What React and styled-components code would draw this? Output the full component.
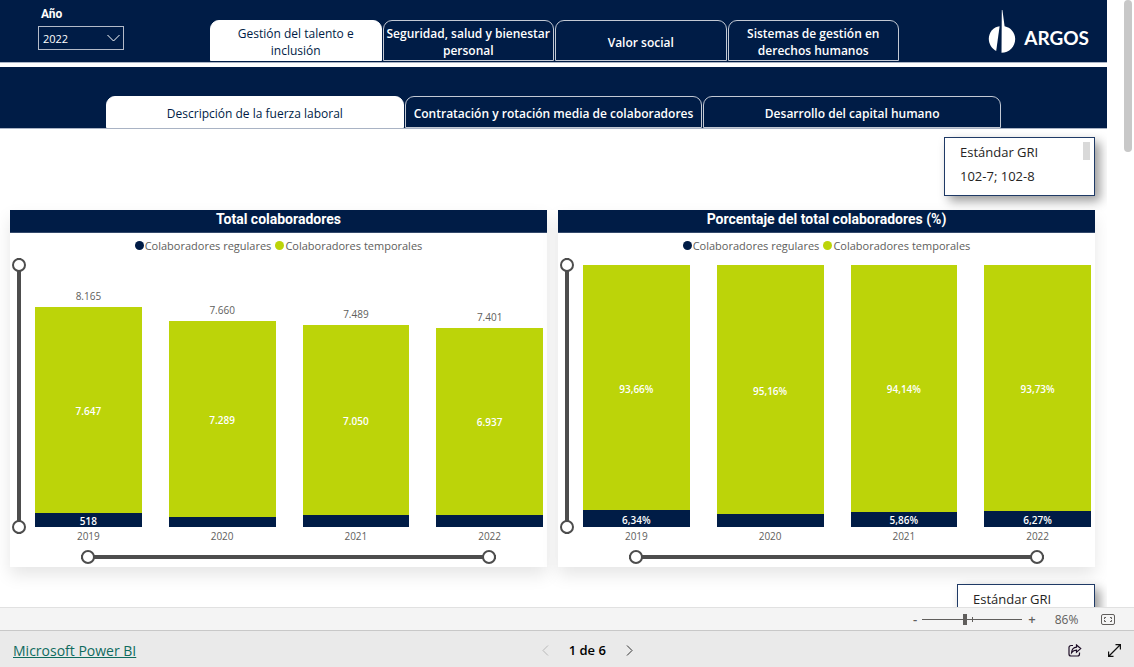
import React, { useState } from 'react';
import styled, { createGlobalStyle } from 'styled-components';

const navy = '#001c46';
const lime = '#bcd409';

const GlobalStyle = createGlobalStyle`
    * {
        box-sizing: border-box;
    }
    body {
        margin: 0;
        background: #fff;
        color: #252423;
        font-family: "Open Sans", "Noto Sans", sans-serif;
        font-size: 12px;
    }
    button, select, input {
        font: inherit;
        color: inherit;
    }
    button {
        padding: 0;
        border: none;
        background: none;
        cursor: pointer;
    }
`;

const Page = styled.div`
    display: flex;
    flex-direction: column;
    height: 100vh;
`;
const Viewport = styled.div`
    display: flex;
    flex: 1;
    min-height: 0;
    overflow: hidden;
`;
const Report = styled.main`
    flex: 1;
    min-width: 0;
    overflow: hidden;
`;
const Rail = styled.div`
    display: flex;
    justify-content: flex-end;
    width: 27px;
    padding-right: 2px;
`;
const Thumb = styled.div`
    width: 8px;
    height: 25%;
    border-radius: 4px;
    background: #c8c8c8;
`;

const Header = styled.header`
    display: grid;
    grid-template-columns: 210px minmax(0, 689px) 1fr;
    height: 63px;
    margin-bottom: 4px;
    background: ${navy};
    border-bottom: 1px solid #a9b3c4;
`;
const YearField = styled.label`
    display: flex;
    flex-direction: column;
    width: 124px;
    padding: 6px 0 0 38px;
    color: #fff;
`;
const YearName = styled.span`
    padding-left: 3px;
    font-family: Roboto, sans-serif;
    font-weight: 700;
    line-height: 16px;
`;
const YearBox = styled.span`
    display: grid;
    align-items: center;
    height: 24px;
    margin-top: 4px;
    border: 1px solid #b3bac8;
    > * {
        grid-area: 1 / 1;
    }
    svg {
        justify-self: end;
        margin-right: 3px;
        pointer-events: none;
    }
`;
const YearSelect = styled.select`
    width: 100%;
    height: 100%;
    padding: 1px 4px 0;
    appearance: none;
    border: none;
    background: transparent;
    color: #fff;
    font-size: 11px;
    option {
        color: #252423;
    }
`;
const MainTabs = styled.nav`
    display: flex;
    gap: 1px;
    padding: 20px 0 1px;
`;
const SubTabs = styled.nav`
    display: flex;
    gap: 1px;
    height: 62px;
    padding: 29px 106px 0;
    background: ${navy};
    border-bottom: 1px solid #a9b3c4;
`;
const Tab = styled.button`
    flex: 1 1 0;
    min-width: 0;
    padding: 3px 2px 0;
    line-height: 17px;
    border: 1px solid ${({active}) => active ? '#fff' : '#c3c9d4'};
    border-radius: 9px 9px 0 0;
    background: ${({active}) => active ? '#fff' : navy};
    color: ${({active}) => active ? navy : '#fff'};
    font-weight: ${({active}) => active ? 400 : 600};
`;
const Brand = styled.div`
    display: flex;
    justify-content: flex-end;
    align-items: flex-start;
    gap: 8px;
    padding: 9px 18px 0 0;
    color: #fff;
`;
const BrandName = styled.span`
    padding-top: 17px;
    font-family: Lato, sans-serif;
    font-size: 19px;
    font-weight: 700;
    line-height: 24px;
`;

const Standards = styled.div`
    display: flex;
    justify-content: flex-end;
    padding: ${({top}) => top}px 12px 0 0;
`;
const StandardBox = styled.section`
    display: flex;
    justify-content: space-between;
    width: ${({width}) => width}px;
    height: 59px;
    padding: 2px 4px 0 15px;
    border: 1px solid #1f3a66;
    background: #fff;
    box-shadow: 5px 5px 10px rgba(0, 0, 0, 0.4);
    font-size: 13px;
    line-height: 24px;
    p {
        margin: 0;
    }
`;
const BoxThumb = styled.div`
    width: 7px;
    height: 18px;
    margin-top: 2px;
    background: #d9d9d9;
`;

const Cards = styled.div`
    display: grid;
    grid-template-columns: 1fr 1fr;
    gap: 11px;
    padding: 14px 12px 0 10px;
`;
const Card = styled.section`
    height: 357px;
    background: #fff;
    box-shadow: 0 8px 16px rgba(0, 0, 0, 0.1);
`;
const CardTitle = styled.h2`
    height: 23px;
    margin: 0;
    background: ${navy};
    border-bottom: 1px solid #33496b;
    color: #fff;
    font-family: Roboto, sans-serif;
    font-size: 14px;
    font-weight: 700;
    line-height: 19px;
    text-align: center;
`;
const Legend = styled.div`
    display: flex;
    justify-content: center;
    gap: 4px;
    height: 25px;
    font-size: 11px;
    line-height: 25px;
    color: #605e5c;
`;
const LegendItem = styled.span`
    display: flex;
    align-items: center;
    gap: 1px;
    &::before {
        content: '';
        width: 9px;
        height: 9px;
        border-radius: 50%;
        background: ${({color}) => color};
    }
`;
const ChartBody = styled.div`
    display: grid;
    grid-template-columns: 14px 1fr;
    column-gap: 9px;
    padding: 0 4px 0 2px;
`;
const Plot = styled.div`
    display: flex;
    gap: 27px;
    padding-top: 7px;
`;
const Column = styled.div`
    flex: 1 1 0;
    text-align: center;
    font-size: 10px;
    color: #605e5c;
`;
const Stack = styled.div`
    display: flex;
    flex-direction: column;
    justify-content: flex-end;
    height: 262px;
`;
const Total = styled.div`
    line-height: 22px;
`;
const Segment = styled.div`
    display: flex;
    align-items: center;
    justify-content: center;
    flex-shrink: 0;
    padding-top: 2px;
    background: ${({color}) => color};
    color: #fff;
    font-weight: 600;
    line-height: 12px;
`;
const Year = styled.div`
    padding-bottom: 2px;
    line-height: 18px;
`;

const RangeBox = styled.div`
    display: grid;
    ${({vertical}) => vertical ? 'height: 276px;' : 'height: 14px; margin: 3px 51px 0 71px;'}
`;
const RangeInput = styled.input`
    grid-area: 1 / 1;
    margin: 0;
    appearance: none;
    background: transparent;
    pointer-events: none;
    ${({vertical}) => vertical ?
        'width: 14px; height: 100%; writing-mode: vertical-lr; direction: rtl;'
        : 'width: 100%; height: 14px;'}
    &::-webkit-slider-runnable-track {
        ${({vertical}) => vertical ? 'width: 4px; height: 100%;' : 'width: 100%; height: 4px;'}
        background: #4d4d4d;
    }
    &::-webkit-slider-thumb {
        appearance: none;
        width: 14px;
        height: 14px;
        ${({vertical}) => vertical ? 'margin-left: -5px;' : 'margin-top: -5px;'}
        border: 2px solid #4d4d4d;
        border-radius: 50%;
        background: #fff;
        pointer-events: auto;
    }
    & + &::-webkit-slider-runnable-track {
        background: transparent;
    }
`;

const ZoomBar = styled.div`
    display: flex;
    align-items: center;
    justify-content: flex-end;
    height: 23px;
    padding-right: 19px;
    border-top: 1px solid #e1e1e1;
    background: #f4f4f4;
    color: #605e5c;
`;
const ZoomStep = styled.button`
    width: 14px;
    font-size: 13px;
    font-weight: 600;
    line-height: 20px;
`;
const ZoomTrack = styled.div`
    display: grid;
    align-items: center;
    width: 100px;
    margin-right: 3px;
    > * {
        grid-area: 1 / 1;
    }
`;
const ZoomTick = styled.span`
    justify-self: center;
    width: 1px;
    height: 5px;
    background: #605e5c;
`;
const ZoomInput = styled.input`
    width: 100%;
    height: 11px;
    margin: 0;
    appearance: none;
    background: transparent;
    &::-webkit-slider-runnable-track {
        height: 1px;
        background: #605e5c;
    }
    &::-webkit-slider-thumb {
        appearance: none;
        width: 4px;
        height: 11px;
        margin-top: -5px;
        background: #605e5c;
    }
`;
const ZoomValue = styled.span`
    width: 62px;
    padding-right: 7px;
    text-align: center;
`;
const IconButton = styled.button`
    display: flex;
    align-items: center;
`;
const Footer = styled.footer`
    display: grid;
    grid-template-columns: 13fr auto 12fr;
    align-items: center;
    height: 37px;
    padding: 2px 13px 0;
    border-top: 1px solid #c8c8c8;
    background: #eaeaea;
`;
const PowerLink = styled.a`
    color: #0f6b5e;
    font-size: 14px;
    text-decoration: underline;
`;
const Pager = styled.div`
    display: flex;
    align-items: center;
    gap: 20px;
    color: #000;
    font-size: 13px;
    font-weight: 600;
`;
const FooterTools = styled.div`
    display: flex;
    justify-content: flex-end;
    gap: 26px;
`;

const mainTabs = [
    'Gestión del talento e inclusión',
    'Seguridad, salud y bienestar personal',
    'Valor social',
    'Sistemas de gestión en derechos humanos',
];
const subTabs = [
    'Descripción de la fuerza laboral',
    'Contratación y rotación media de colaboradores',
    'Desarrollo del capital humano',
];

const totals = [
    { year: 2019, total: '8.165', top: 7647, topText: '7.647', base: 518, baseText: '518' },
    { year: 2020, total: '7.660', top: 7289, topText: '7.289', base: 371 },
    { year: 2021, total: '7.489', top: 7050, topText: '7.050', base: 439 },
    { year: 2022, total: '7.401', top: 6937, topText: '6.937', base: 464 },
];
const shares = [
    { year: 2019, top: 93.66, topText: '93,66%', base: 6.34, baseText: '6,34%' },
    { year: 2020, top: 95.16, topText: '95,16%', base: 4.84 },
    { year: 2021, top: 94.14, topText: '94,14%', base: 5.86, baseText: '5,86%' },
    { year: 2022, top: 93.73, topText: '93,73%', base: 6.27, baseText: '6,27%' },
];

const ArgosMark = () => (
    <svg width="28" height="45" viewBox="0 0 28 45" fill="#fff" aria-hidden="true">
        <path d="M11.6 17.2C5.5 17.8 .8 23.2 .8 29.8c0 5.4 2.9 9.9 7.4 12.1z" />
        <path d="M13.8 1h.6l2.2 16.3c6 1.2 10.6 6.3 10.6 12.6 0 7.6-5.9 13.8-13.7 13.8z" />
    </svg>
);

const Chevron = ({ points, width, height, color }) => (
    <svg width={width} height={height} fill="none" stroke={color} aria-hidden="true">
        <polyline points={points} />
    </svg>
);

//dos controles superpuestos, uno por cada extremo del rango
const RangeSlider = ({ vertical, label }) => {
    const [low, setLow] = useState(0);
    const [high, setHigh] = useState(100);

    return (
        <RangeBox vertical={vertical}>
            <RangeInput
                type="range"
                aria-label={`${label}: mínimo`}
                vertical={vertical}
                value={low}
                onChange={(e) => setLow(Math.min(Number(e.target.value), high))}
            />
            <RangeInput
                type="range"
                aria-label={`${label}: máximo`}
                vertical={vertical}
                value={high}
                onChange={(e) => setHigh(Math.max(Number(e.target.value), low))}
            />
        </RangeBox>
    );
};

const ChartCard = ({ title, data, max }) => (
    <Card>
        <CardTitle>{title}</CardTitle>
        <Legend>
            <LegendItem color={navy}>Colaboradores regulares</LegendItem>
            <LegendItem color={lime}>Colaboradores temporales</LegendItem>
        </Legend>
        <ChartBody>
            <RangeSlider vertical label="Eje de valores" />
            <Plot>
                {data.map((item) => (
                    <Column key={item.year}>
                        <Stack>
                            {item.total && <Total>{item.total}</Total>}
                            <Segment color={lime} style={{ height: `${item.top / max * 100}%` }}>
                                {item.topText}
                            </Segment>
                            <Segment color={navy} style={{ height: `${item.base / max * 100}%` }}>
                                {item.baseText}
                            </Segment>
                        </Stack>
                        <Year>{item.year}</Year>
                    </Column>
                ))}
            </Plot>
        </ChartBody>
        <RangeSlider label="Años" />
    </Card>
);

const App = () => {
    const [year, setYear] = useState('2022');
    const [mainTab, setMainTab] = useState(0);
    const [subTab, setSubTab] = useState(0);
    const [zoom, setZoom] = useState(86);

    return (
        <Page>
            <GlobalStyle />
            <Viewport>
                <Report>
                    <Header>
                        <YearField>
                            <YearName>Año</YearName>
                            <YearBox>
                                <YearSelect value={year} onChange={(e) => setYear(e.target.value)}>
                                    <option>2019</option>
                                    <option>2020</option>
                                    <option>2021</option>
                                    <option>2022</option>
                                </YearSelect>
                                <Chevron points="0.5,1 6.5,7 12.5,1" width={13} height={8} color="#fff" />
                            </YearBox>
                        </YearField>
                        <MainTabs>
                            {mainTabs.map((text, i) => (
                                <Tab key={text} type="button" active={i === mainTab} onClick={() => setMainTab(i)}>
                                    {text}
                                </Tab>
                            ))}
                        </MainTabs>
                        <Brand>
                            <ArgosMark />
                            <BrandName>ARGOS</BrandName>
                        </Brand>
                    </Header>
                    <SubTabs>
                        {subTabs.map((text, i) => (
                            <Tab key={text} type="button" active={i === subTab} onClick={() => setSubTab(i)}>
                                {text}
                            </Tab>
                        ))}
                    </SubTabs>
                    <Standards top={8}>
                        <StandardBox width={151}>
                            <div>
                                <p>Estándar GRI</p>
                                <p>102-7; 102-8</p>
                            </div>
                            <BoxThumb />
                        </StandardBox>
                    </Standards>
                    <Cards>
                        <ChartCard title="Total colaboradores" data={totals} max={9731} />
                        <ChartCard title="Porcentaje del total colaboradores (%)" data={shares} max={100} />
                    </Cards>
                    <Standards top={17}>
                        <StandardBox width={138}>
                            <p>Estándar GRI</p>
                        </StandardBox>
                    </Standards>
                </Report>
                <Rail>
                    <Thumb />
                </Rail>
            </Viewport>
            <ZoomBar>
                <ZoomStep type="button" onClick={() => setZoom(zoom - 1)}>-</ZoomStep>
                <ZoomTrack>
                    <ZoomTick />
                    <ZoomInput
                        type="range"
                        aria-label="Zoom"
                        min={0}
                        max={200}
                        value={zoom}
                        onChange={(e) => setZoom(Number(e.target.value))}
                    />
                </ZoomTrack>
                <ZoomStep type="button" onClick={() => setZoom(zoom + 1)}>+</ZoomStep>
                <ZoomValue>{zoom}%</ZoomValue>
                <IconButton type="button" aria-label="Ajustar a la página">
                    <svg width="14" height="11" fill="none" stroke="#605e5c">
                        <rect x=".5" y=".5" width="13" height="10" rx="1.5" />
                        <path d="M5 3.5H3.500V5M9 3.500h1.500V5M5 7.500H3.500V6M9 7.500h1.500V6" />
                    </svg>
                </IconButton>
            </ZoomBar>
            <Footer>
                <div>
                    <PowerLink href="#powerbi">Microsoft Power BI</PowerLink>
                </div>
                <Pager>
                    <IconButton type="button" aria-label="Página anterior" disabled>
                        <Chevron points="6,0.5 1,5.5 6,10.5" width={7} height={11} color="#b8b8b8" />
                    </IconButton>
                    <span>1 de 6</span>
                    <IconButton type="button" aria-label="Página siguiente">
                        <Chevron points="1,0.5 6,5.5 1,10.5" width={7} height={11} color="#333" />
                    </IconButton>
                </Pager>
                <FooterTools>
                    <IconButton type="button" aria-label="Compartir">
                        <svg width="14" height="13" fill="none" stroke="#1d0d26" strokeWidth="1.2">
                            <path d="M5 1.5H3a2 2 0 0 0-2 2V10a2 2 0 0 0 2 2h6.5a2 2 0 0 0 2-2V8.5" />
                            <path d="M8.5 1l4.2 3.6-4.2 3.6V6.2C6.2 6.200 4.800 7 3.600 8.600 3.900 5.400 5.500 3.400 8.500 3.200z" />
                        </svg>
                    </IconButton>
                    <IconButton type="button" aria-label="Pantalla completa">
                        <svg width="13" height="13" fill="none" stroke="#111" strokeWidth="1.2">
                            <path d="M1 12L12 1M7.5 .6h4.900v4.900M.6 7.500v4.900h4.900" />
                        </svg>
                    </IconButton>
                </FooterTools>
            </Footer>
        </Page>
    );
};

export default App;
